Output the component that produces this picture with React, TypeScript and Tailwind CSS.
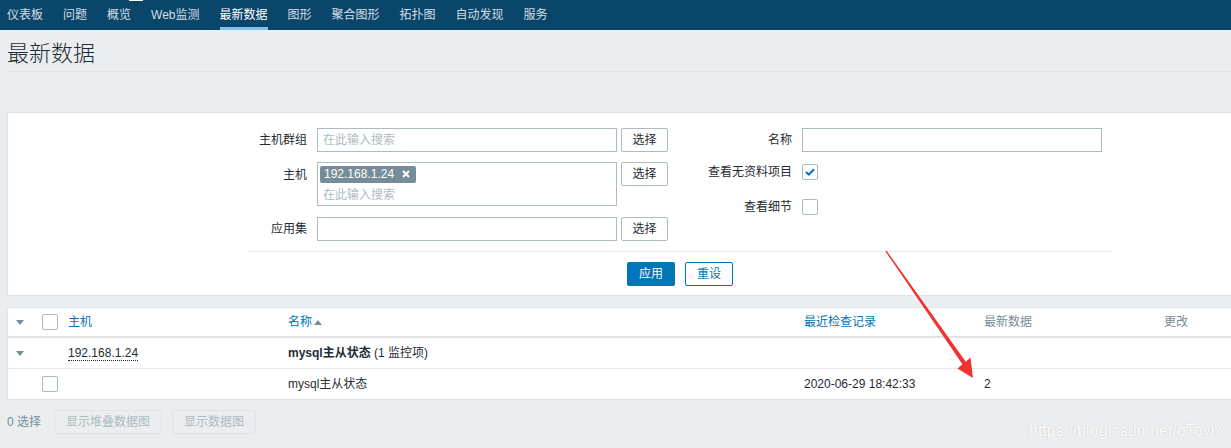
import React from "react";

const font = { fontFamily: '"Liberation Sans", "Noto Sans CJK SC", sans-serif' };

const navItems = ["仪表板", "问题", "概览", "Web监测", "最新数据", "图形", "聚合图形", "拓扑图", "自动发现", "服务"];

function Checkbox({ checked = false }: { checked?: boolean }) {
  return (
    <span className="flex h-4 w-4 items-center justify-center rounded-[2px] border border-[#acbbc2] bg-white">
      {checked && (
        <svg width="10" height="8" viewBox="0 0 10 8">
          <path d="M1 4 L3.8 6.6 L9 1.2" fill="none" stroke="#0275b8" strokeWidth="2" />
        </svg>
      )}
    </span>
  );
}

function SelectButton() {
  return (
    <button className="h-6 w-[47px] rounded-[2px] border border-[#acbbc2] bg-white text-[12px] text-[#1f2c33]">
      选择
    </button>
  );
}

function DownTriangle() {
  return (
    <svg width="8" height="5" viewBox="0 0 8 5">
      <polygon points="0,0 8,0 4,5" fill="#768d99" />
    </svg>
  );
}

export default function App() {
  return (
    <div className="relative h-[448px] w-[1231px] overflow-hidden bg-[#ebeef0] text-[12px] text-[#1f2c33]" style={font}>
      {/* top nav */}
      <nav className="relative flex h-[30px] items-stretch gap-5 bg-[#0a466a] pl-[7px]">
        {navItems.map((item) => {
          const active = item === "最新数据";
          return (
            <div
              key={item}
              className={
                active
                  ? "flex items-center border-b-[3px] border-[#7fc2ec] pt-[3px] text-white"
                  : "flex items-center text-[#d3dee6]"
              }
            >
              {item}
            </div>
          );
        })}
        <div className="absolute left-[129px] top-0 h-px w-[14px] bg-white" />
      </nav>

      <div className="pl-[7px]">
        {/* title */}
        <div className="flex h-[42px] items-center border-b border-[#dfe4e7] pt-[7px]">
          <h1 className="text-[22px] font-light leading-none text-[#1f2c33]">最新数据</h1>
        </div>

        {/* filter */}
        <div className="mt-[40px] border border-r-0 border-[#dfe4e7] bg-white pt-[15px] pb-[9px]">
          <div className="ml-[240px] w-[864px]">
            <div className="flex">
              {/* left column */}
              <div className="w-[432px]">
                <div className="flex h-6 items-center">
                  <label className="w-[59px] text-right">主机群组</label>
                  <div className="ml-[10px] flex h-6 w-[300px] items-center border border-[#acbbc2] px-[5px] text-[#acbbc2]">
                    在此输入搜索
                  </div>
                  <div className="ml-1">
                    <SelectButton />
                  </div>
                </div>
                <div className="mt-[10px] flex">
                  <label className="mt-[4px] w-[59px] text-right">主机</label>
                  <div className="ml-[10px] h-[44px] w-[300px] border border-[#acbbc2] pl-[2px] pt-[2px]">
                    <span className="inline-flex h-[17px] items-center gap-[8px] rounded-[2px] bg-[#768d99] pl-[4px] pr-[6px] text-white">
                      192.168.1.24
                      <svg width="8" height="8" viewBox="0 0 8 8">
                        <path d="M1 1 L7 7 M7 1 L1 7" stroke="white" strokeWidth="2" />
                      </svg>
                    </span>
                    <div className="mt-[3px] pl-[3px] text-[#acbbc2]">在此输入搜索</div>
                  </div>
                  <div className="ml-1">
                    <SelectButton />
                  </div>
                </div>
                <div className="mt-[11px] flex h-6 items-center">
                  <label className="w-[59px] text-right">应用集</label>
                  <div className="ml-[10px] h-6 w-[300px] border border-[#acbbc2]" />
                  <div className="ml-1">
                    <SelectButton />
                  </div>
                </div>
              </div>

              {/* right column */}
              <div className="w-[432px]">
                <div className="flex h-6 items-center">
                  <label className="w-[112px] text-right">名称</label>
                  <div className="ml-[10px] h-6 w-[300px] border border-[#acbbc2]" />
                </div>
                <div className="mt-2 flex h-6 items-center">
                  <label className="w-[112px] text-right">查看无资料项目</label>
                  <div className="ml-[10px]">
                    <Checkbox checked />
                  </div>
                </div>
                <div className="mt-[11px] flex h-6 items-center">
                  <label className="w-[112px] text-right">查看细节</label>
                  <div className="ml-[10px]">
                    <Checkbox />
                  </div>
                </div>
              </div>
            </div>

            <div className="mt-[10px] border-t border-[#e6eaec]" />
            <div className="mt-[10px] flex justify-center gap-[10px]">
              <button className="h-6 w-12 rounded-[2px] bg-[#0275b8] text-[12px] text-white">应用</button>
              <button className="h-6 w-12 rounded-[2px] border border-[#0275b8] bg-white text-[12px] text-[#0275b8]">重设</button>
            </div>
          </div>
        </div>

        {/* table */}
        <div className="mt-[11px] border border-r-0 border-[#dfe4e7] bg-white">
          <div className="flex h-[30px] items-center border-b-2 border-[#dfe4e7]">
            <div className="w-[27px] pl-2">
              <DownTriangle />
            </div>
            <div className="w-[33px] pl-[7px]">
              <Checkbox />
            </div>
            <div className="w-[220px] text-[#0275b8]">主机</div>
            <div className="flex w-[516px] items-center gap-[2px] text-[#0275b8]">
              名称
              <svg width="8" height="5" viewBox="0 0 8 5">
                <polygon points="0,5 8,5 4,0" fill="#768d99" />
              </svg>
            </div>
            <div className="w-[180px] text-[#0275b8]">最近检查记录</div>
            <div className="w-[180px] text-[#768d99]">最新数据</div>
            <div className="flex-1 text-[#768d99]">更改</div>
          </div>
          <div className="flex h-[31px] items-center border-b border-[#e6eaec]">
            <div className="w-[27px] pl-2">
              <DownTriangle />
            </div>
            <div className="w-[33px]" />
            <div className="w-[220px]">
              <span className="border-b border-dotted border-[#1f2c33] leading-[14px]">192.168.1.24</span>
            </div>
            <div className="w-[516px]">
              <span className="font-bold">mysql主从状态</span> (1 监控项)
            </div>
          </div>
          <div className="flex h-[30px] items-center">
            <div className="w-[27px]" />
            <div className="w-[33px] pl-[7px]">
              <Checkbox />
            </div>
            <div className="w-[220px]" />
            <div className="w-[516px]">mysql主从状态</div>
            <div className="w-[180px]">2020-06-29 18:42:33</div>
            <div className="w-[180px]">2</div>
            <div className="flex-1" />
          </div>
        </div>

        {/* footer */}
        <div className="mt-[10px] flex items-center">
          <span className="text-[#768d99]">0 选择</span>
          <button className="ml-[13px] h-6 w-[108px] rounded-[2px] border border-[#dfe4e7] bg-[#ebeef0] text-[12px] text-[#acbbc2]">
            显示堆叠数据图
          </button>
          <button className="ml-[10px] h-6 w-[84px] rounded-[2px] border border-[#dfe4e7] bg-[#ebeef0] text-[12px] text-[#acbbc2]">
            显示数据图
          </button>
        </div>
      </div>

      {/* watermark */}
      <div className="absolute right-[9px] top-[419px] text-[16px] text-white [text-shadow:0_0_1px_rgba(0,0,0,0.25)]">
        https://blog.csdn.net/oToyix
      </div>

      {/* red annotation arrow */}
      <svg className="pointer-events-none absolute left-0 top-0" width="1231" height="448">
        <polygon
          points="885.5,251.4 886.5,250.6 965.8,361.8 970.5,357.5 973,378 957.5,368.5 962.4,364.2"
          fill="#f03232"
        />
      </svg>
    </div>
  );
}
